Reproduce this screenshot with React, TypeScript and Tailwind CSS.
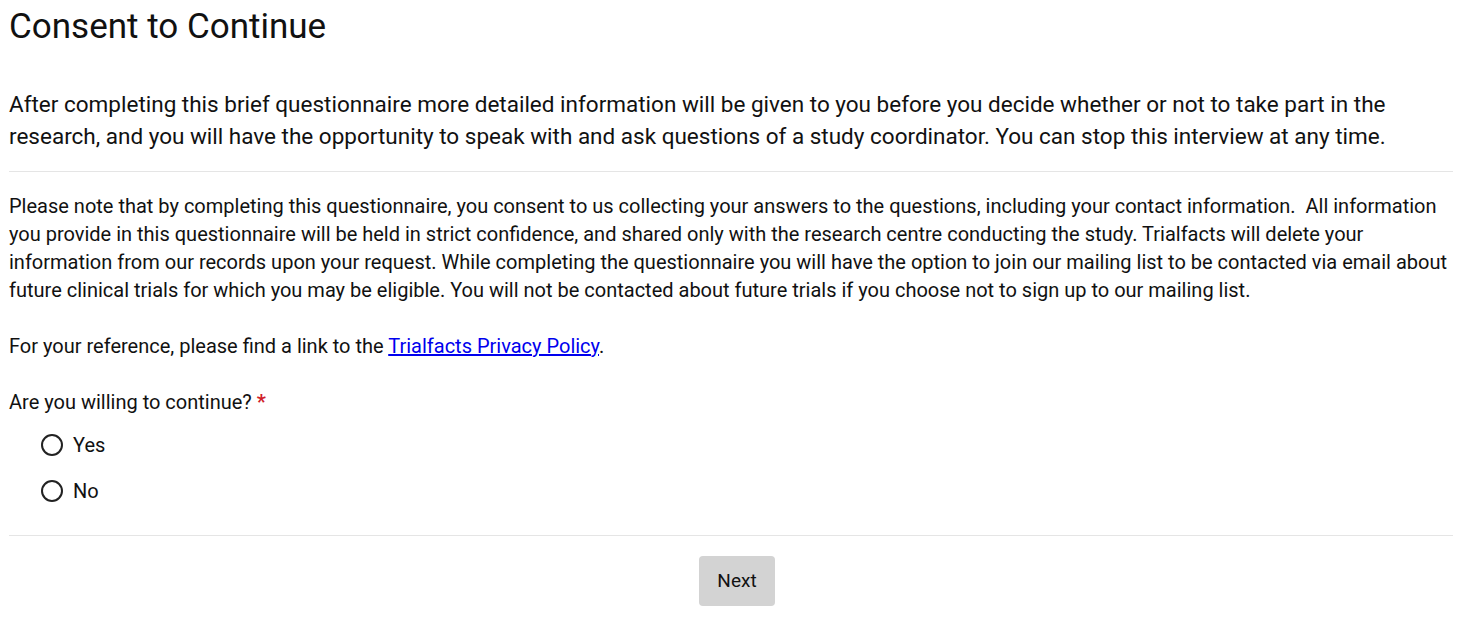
import React from "react";

export default function App() {
  return (
    <div className="bg-white text-[#111] px-[9px] w-[1462px]" style={{ fontFamily: "Roboto, 'Liberation Sans', sans-serif" }}>
      <h1 className="text-[35px] leading-[40px] pt-[7px] m-0">Consent to Continue</h1>
      <p className="text-[22.5px] leading-[32px] mt-[41px]">
        After completing this brief questionnaire more detailed information will be given to you before you decide whether or not to take part in the research, and you will have the opportunity to speak with and ask questions of a study coordinator. You can stop this interview at any time.
      </p>
      <hr className="border-t border-[#e5e5e5] mt-[19px]" />
      <p className="text-[20px] leading-[28px] mt-[20px]">
        Please note that by completing this questionnaire, you consent to us collecting your answers to the questions, including your contact information.&nbsp; All information you provide in this questionnaire will be held in strict confidence, and shared only with the research centre conducting the study. Trialfacts will delete your information from our records upon your request. While completing the questionnaire you will have the option to join our mailing list to be contacted via email about future clinical trials for which you may be eligible. You will not be contacted about future trials if you choose not to sign up to our mailing list.
      </p>
      <p className="text-[20px] leading-[28px] mt-[28px]">
        For your reference, please find a link to the{" "}
        <a href="#" className="text-[#0000ee] underline">Trialfacts Privacy Policy</a>.
      </p>
      <p className="text-[20px] leading-[28px] mt-[28px]">
        Are you willing to continue? <span className="text-[#d0202a] font-bold">*</span>
      </p>
      <div className="flex flex-col gap-[18px] mt-[15px] pl-[32px]">
        {["Yes", "No"].map((l) => (
          <label key={l} className="flex items-center gap-[10px] text-[20px] leading-[28px]">
            <span className="w-[22px] h-[22px] rounded-full border-[2px] border-[#222] inline-block" />
            {l}
          </label>
        ))}
      </div>
      <hr className="border-t border-[#e5e5e5] mt-[30px]" />
      <div className="flex justify-center pt-[20px] pl-[12px]">
        <button className="bg-[#d3d3d3] rounded-[4px] w-[76px] h-[50px] text-[19px] text-[#111]">Next</button>
      </div>
    </div>
  );
}
